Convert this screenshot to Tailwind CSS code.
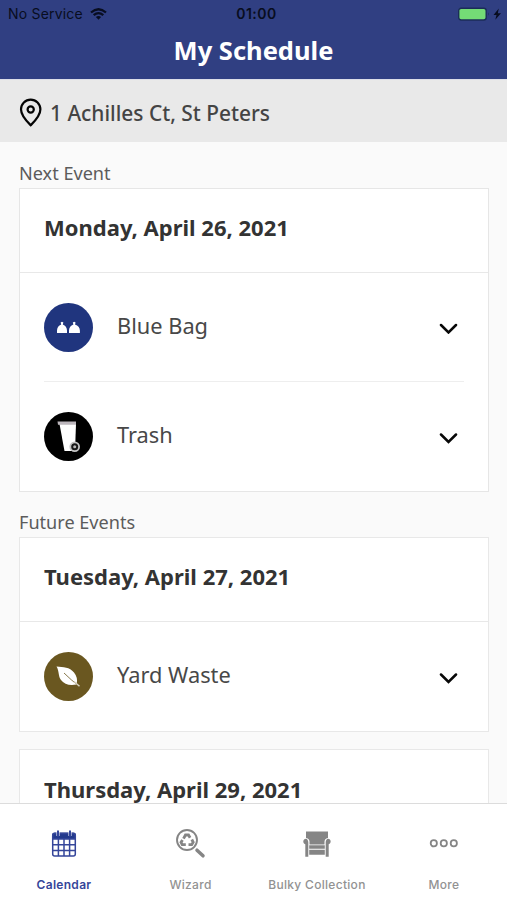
<!DOCTYPE html>
<html lang="en">
<head>
<meta charset="utf-8">
<title>My Schedule</title>
<script src="https://cdn.jsdelivr.net/npm/@tailwindcss/browser@4"></script>
</head>
<body class="h-[900px] w-[507px] overflow-hidden bg-[#fafafa] font-['Noto_Sans',sans-serif] text-[#333]">
<div class="flex h-[900px] flex-col whitespace-nowrap">
  <header class="h-[79px] shrink-0 bg-[#303f82]">
    <div class="grid h-[27px] grid-cols-3 items-center pl-2 pr-[5px] font-['Inter',sans-serif] text-[14px] text-[#080d20]">
      <div class="flex items-center gap-[7px]"><span class="tracking-[0.2px]">No Service</span>
        <svg class="h-[12px] w-[17px]" viewBox="0 0 17 12" fill="none" stroke="#080d20" stroke-width="2.3"><path d="M1 4.5Q8.500-2 16 4.500M3.700 7.200Q8.500 3 13.300 7.200"/><path d="M5.900 9.100Q8.500 7 11.100 9.100L8.500 11.700Z" fill="#080d20" stroke="none"/></svg>
      </div>
      <span class="pl-[3px] text-center font-semibold tracking-[0.5px]">01:00</span>
      <svg class="h-[14px] w-[44px] justify-self-end" viewBox="0 0 44 14"><rect x=".7" y="1.200" width="27.500" height="11.800" rx="2.500" fill="#74db76" stroke="#1b2c58" stroke-width="1.400"/><path d="M30.200 5.300q1.500 1.700 0 3.400z" fill="#1b2c58"/><path d="M40.800 1.500 35.500 8h3l-1.200 4.800L43 6.200h-3.200z" fill="#080d20"/></svg>
    </div>
    <h1 class="text-center text-[25.5px] leading-[47px] font-bold text-white">My Schedule</h1>
  </header>
  <div class="flex h-[63px] shrink-0 items-center gap-[8px] border-t border-[#dcdee8] bg-[#e9e9e9] pl-[19px] pt-[6px]">
    <svg class="mb-[4px] h-[29px] w-[23px]" viewBox="0 0 23 29" fill="none" stroke="#050505" stroke-width="2.200"><path d="M11.700 27.200C8 23.600 2 18 2 11.300a9.700 9.700 0 0 1 19.400 0c0 6.700-6 12.300-9.700 15.900Z"/><circle cx="11.700" cy="11.500" r="3.100"/></svg>
    <span class="text-[20.900px] font-medium text-[#444]">1 Achilles Ct, St Peters</span>
  </div>
  <main class="min-h-0 flex-1 overflow-hidden pr-[18px] pl-[19px]">
    <h2 class="h-[46px] pt-[17px] text-[18.100px] leading-[28px] text-[#5c5c5c]">Next Event</h2>
    <section class="h-[304px] border border-[#e6e6e6] bg-white">
      <h3 class="h-[84px] border-b border-[#e8e8e8] pl-6 text-[22px] leading-[77px] font-bold">Monday, April 26, 2021</h3>
      <div class="mx-6 flex h-[109px] items-center border-b border-[#eee]">
        <svg class="h-[49px] w-[49px]" viewBox="0 0 49 49"><circle cx="24.500" cy="24.500" r="24.500" fill="#20357e"/><g fill="#fff"><path d="M13 30v-2.500q.2-4.500 4.200-6l-.6-2 1.400-.8 1.400.8-.6 2q4 1.500 4.200 6V30z"/><path d="M25 30v-2.500q.2-4.500 4.400-6l-.6-2 1.400-.8 1.400.8-.6 2q4.700 1.500 4.900 6V30z"/></g></svg>
        <span class="mb-[2px] ml-6 flex-1 text-[21.800px] text-[#484848]">Blue Bag</span>
        <svg class="mt-[3px] mr-[6px] h-[11px] w-[19px]" viewBox="0 0 19 11" fill="none" stroke="#080808" stroke-width="2.500" stroke-linecap="round"><path d="M2 2 9.500 9.500 17 2"/></svg>
      </div>
      <div class="mx-6 flex h-[109px] items-center">
        <svg class="h-[49px] w-[49px]" viewBox="0 0 49 49"><circle cx="24.500" cy="24.500" r="24.500"/><path d="M15.500 12h16.500l-1 27H20.500z" fill="#fff"/><path d="M13.500 9.500h18.500v3.200H14z" fill="#bdb7bd"/><circle cx="30.700" cy="34.700" r="4.400" fill="#181818" stroke="#c4c4c4" stroke-width="1.800"/><circle cx="30.700" cy="34.700" r="1.500" fill="#bbb"/></svg>
        <span class="mb-[2px] ml-6 flex-1 text-[21.800px] text-[#484848]">Trash</span>
        <svg class="mt-[3px] mr-[6px] h-[11px] w-[19px]" viewBox="0 0 19 11" fill="none" stroke="#080808" stroke-width="2.500" stroke-linecap="round"><path d="M2 1.500 9.500 9 17 1.500"/></svg>
      </div>
    </section>
    <h2 class="h-[45px] pt-[16px] text-[18.100px] leading-[28px] text-[#5c5c5c]">Future Events</h2>
    <section class="h-[195px] border border-[#e8e8e8] bg-white">
      <h3 class="h-[84px] border-b border-[#e8e8e8] pl-6 text-[22px] leading-[77px] font-bold">Tuesday, April 27, 2021</h3>
      <div class="mx-6 flex h-[109px] items-center">
        <svg class="h-[49px] w-[49px]" viewBox="0 0 49 49"><circle cx="24.500" cy="24.500" r="24.500" fill="#6a5720"/><path d="M12.500 14.500c7 .5 13 .5 17.500 6q4.500 5.500 2.500 12-10.500 2-15.500-4.500c-3-4-1.500-8.500-4.500-13.500z" fill="#fff"/><path d="M20 21q7 7 15.500 13.500" fill="none" stroke="#6a5720" stroke-width=".8"/><path d="M30 29.500l5.500 4.800" stroke="#d8d2c0" stroke-width="1.500"/></svg>
        <span class="mb-[2px] ml-6 flex-1 text-[21.800px] text-[#484848]">Yard Waste</span>
        <svg class="mt-[3px] mr-[6px] h-[11px] w-[19px]" viewBox="0 0 19 11" fill="none" stroke="#080808" stroke-width="2.500" stroke-linecap="round"><path d="M2 1.500 9.500 9 17 1.500"/></svg>
      </div>
    </section>
    <section class="mt-[17px] h-[195px] border border-[#e8e8e8] bg-white">
      <h3 class="h-[84px] pl-6 text-[22px] leading-[78px] font-bold">Thursday, April 29, 2021</h3>
    </section>
  </main>
  <nav class="grid h-[97px] shrink-0 grid-cols-[128px_125px_128px_126px] border-t border-[#dcdcdc] bg-white pt-[24px] text-center font-['Inter',sans-serif] text-[12px] font-medium tracking-[0.3px] text-[#929292]">
    <div class="flex flex-col items-center gap-[14px] text-[#35469a]">
      <svg class="h-[34px] w-[30px]" viewBox="0 0 30 34"><path d="M3 7q0-2.500 2.500-2.500h19Q27 4.500 27 7v4H3z" fill="#22398c"/><g fill="none" stroke="#35469a" stroke-width="1.500"><rect x="3.700" y="5.500" width="22.600" height="22.600" rx="2"/><path d="M3.700 11h22.600M3.700 16.700h22.600M3.700 22.400h22.600M9.400 11v17M15 11v17M20.600 11v17"/></g><path d="M9 4v4M21 4v4" stroke="#fff" stroke-width="3.400" opacity=".7"/><path d="M9 2.500v6M21 2.500v6" stroke="#35469a" stroke-width="2"/></svg>
      <span class="font-semibold">Calendar</span>
    </div>
    <div class="flex flex-col items-center gap-[14px]">
      <svg class="h-[34px] w-[30px]" viewBox="0 0 30 34" fill="none" stroke="#858585"><circle cx="11" cy="12" r="10" stroke-width="1.900"/><path d="m21 22.200 6 5.600" stroke-width="3.500" stroke-linecap="round"/><g stroke-width="2.800"><path d="m7.500 10.700 2-3.700h3l1.600 2.700M15.800 11.500l1.400 2.700-1.500 2.500H12.500M9.800 16.700H6.200L5 14.400 6.500 12"/></g></svg>
      <span>Wizard</span>
    </div>
    <div class="flex flex-col items-center gap-[14px]">
      <svg class="h-[34px] w-[30px]" viewBox="0 0 30 34" fill="#858585"><path d="M4 3.500h22v6.500q-4 .5-3.500 5v1.500h-15V15q.5-4.500-3.500-5z"/><path d="M4 10.700c-3.200 0-3.700 4.500-.7 5.500v12.500h3V14.500c0-2-1-3.800-2.300-3.800zM26 10.700c3.200 0 3.700 4.500.7 5.500v12.500h-3V14.500c0-2 1-3.800 2.300-3.800z"/><path d="M7.200 17.200h15.600v3.600H7.200zM7.200 21.800h15.600v4.900H7.200z"/></svg>
      <span>Bulky Collection</span>
    </div>
    <div class="flex flex-col items-center gap-[14px]">
      <svg class="h-[34px] w-[30px]" viewBox="0 0 30 34" fill="none" stroke="#858585" stroke-width="1.800"><circle cx="4.800" cy="15.300" r="3.100"/><circle cx="14.800" cy="15.300" r="3.100"/><circle cx="24.800" cy="15.300" r="3.100"/></svg>
      <span>More</span>
    </div>
  </nav>
</div>
</body>
</html>
